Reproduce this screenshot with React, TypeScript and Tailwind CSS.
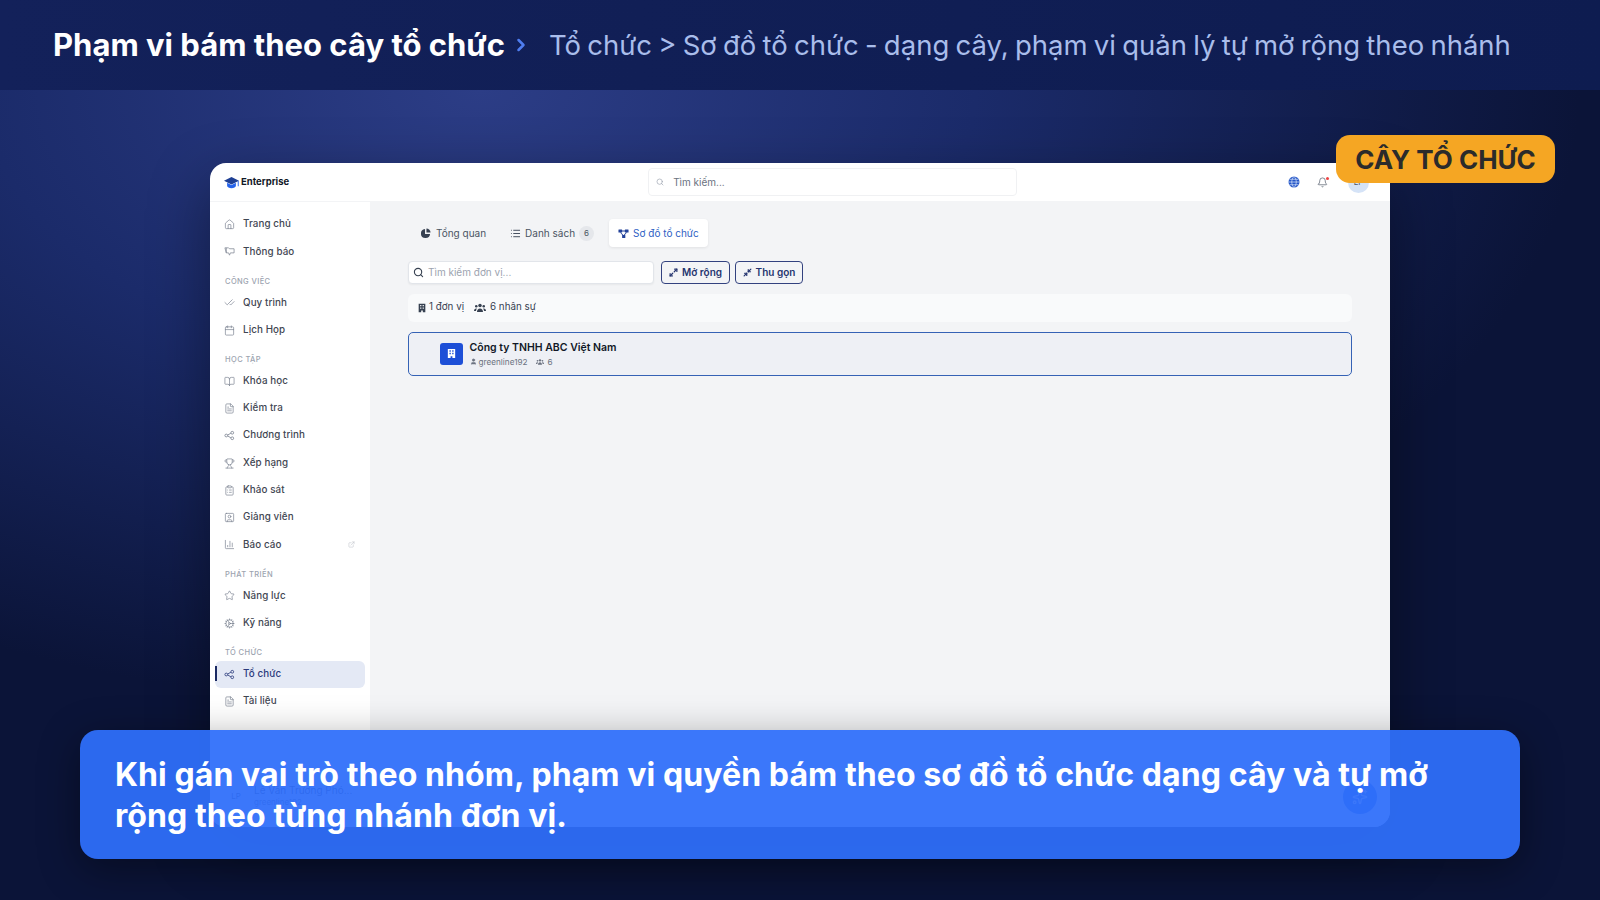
import {
  BarChart3,
  BookOpen,
  Calendar,
  CheckCheck,
  ChevronRight,
  ClipboardList,
  Cog,
  ExternalLink,
  FileText,
  Bell,
  Home,
  List,
  Maximize2,
  Minimize2,
  Search,
  Sparkles,
  SquareUser,
  Star,
  Trophy,
  User,
} from 'lucide-react';
import type { ReactNode } from 'react';

function OrgIcon({ className }: { className?: string }) {
  return (
    <svg viewBox="0 0 24 24" fill="none" stroke="currentColor" strokeWidth="1.8" className={className}>
      <circle cx="5" cy="12" r="3" />
      <circle cx="18" cy="6" r="3" />
      <circle cx="18" cy="18" r="3" />
      <path d="M8 11l7-4M8 13l7 4" />
    </svg>
  );
}

function TreeIcon({ className }: { className?: string }) {
  return (
    <svg viewBox="0 0 24 24" fill="currentColor" className={className}>
      <rect x="1" y="3" width="8" height="7" rx="1" />
      <rect x="15" y="3" width="8" height="7" rx="1" />
      <rect x="9" y="15" width="7" height="7" rx="1" />
      <path d="M8 5.500h8v2H8zM6 9l6 7-1.500 1-6-7zM18 9l-6 7 1.500 1 6-7z" />
    </svg>
  );
}

function LogoIcon({ className }: { className?: string }) {
  return (
    <svg viewBox="0 0 24 20" className={className}>
      <path d="M12 1L0 7l12 6 12-6z" fill="#1e3f94" />
      <path d="M5 10.500v5c0 2 3.500 3.500 7 3.500s7-1.500 7-3.500v-5l-7 3.500z" fill="#2563eb" />
      <path d="M22 8v8h1.500V7.300z" fill="#2563eb" />
    </svg>
  );
}

function AnnounceIcon({ className }: { className?: string }) {
  return (
    <svg viewBox="0 0 24 24" fill="none" stroke="currentColor" strokeWidth="1.6" className={className}>
      <path d="M2 4h8l2 2h10v9h-8l-2 5-2-5H5z" />
      <path d="M5 4v11" />
    </svg>
  );
}

function PieIcon({ className }: { className?: string }) {
  return (
    <svg viewBox="0 0 24 24" fill="currentColor" className={className}>
      <path d="M11 2a10 10 0 1 0 11 11H11z" />
      <path d="M14 1a9 9 0 0 1 9 9h-9z" />
    </svg>
  );
}

function BuildingIcon({ className }: { className?: string }) {
  return (
    <svg viewBox="0 0 24 24" className={className}>
      <path
        fillRule="evenodd"
        fill="currentColor"
        d="M4 2h16v20h-6v-4h-4v4H4zM7.500 5v3h3V5zm6 0v3h3V5zm-6 5.500v3h3v-3zm6 0v3h3v-3z"
      />
    </svg>
  );
}

function PeopleIcon({ className }: { className?: string }) {
  return (
    <svg viewBox="0 0 24 24" fill="currentColor" className={className}>
      <circle cx="12" cy="7" r="3.500" />
      <circle cx="4.500" cy="8.500" r="2.500" />
      <circle cx="19.500" cy="8.500" r="2.500" />
      <path d="M6 20c0-4 2.500-7 6-7s6 3 6 7zM0 18c0-3 1.500-5 4.500-5 .5 0 1 .1 1.400.2C4.700 14.600 4 16.200 4 18zM24 18c0-3-1.500-5-4.500-5-.5 0-1 .1-1.400.2 1.200 1.400 1.900 3 1.900 4.800z" />
    </svg>
  );
}

function GlobeIcon({ className }: { className?: string }) {
  return (
    <svg viewBox="0 0 24 24" className={className}>
      <circle cx="12" cy="12" r="11" fill="#2456c8" />
      <path d="M1 12h22M3 6.500h18M3 17.500h18M12 1c-6 6-6 16 0 22M12 1c6 6 6 16 0 22" fill="none" stroke="#dbe6fb" strokeWidth="1.400" />
    </svg>
  );
}

function NavItem({ icon, label, active, trailing }: { icon: ReactNode; label: string; active?: boolean; trailing?: ReactNode }) {
  return (
    <div className={`relative mx-[5px] flex h-[27.3px] items-center pl-[9px] pr-[10px] ${active ? 'rounded-md bg-[#e4e9f5] text-[#2b3a7c]' : 'text-[#3f4652]'}`}>
      {active && <span className="absolute left-0 top-[5px] h-[15px] w-[2px] bg-[#1b2a63]" />}
      <span className={`flex w-[19px] shrink-0 items-center ${active ? 'text-[#2b3a7c]' : 'text-[#7b8290]'}`}>{icon}</span>
      <span className="text-[9.8px] font-medium tracking-[0.1px]">{label}</span>
      {trailing && <span className="ml-auto text-[#b0b5bf]">{trailing}</span>}
    </div>
  );
}

function SectionLabel({ children }: { children: string }) {
  return (
    <div className="flex h-[23.7px] items-end pb-[2px] pl-[15px] text-[7.5px] font-medium tracking-[0.4px] text-[#9ca3af]">
      {children}
    </div>
  );
}

const ic = 'h-[11px] w-[11px]';

function Sidebar() {
  return (
    <aside className="w-[160px] shrink-0 bg-white pt-[9px]">
      <NavItem icon={<Home className={ic} strokeWidth={1.5} />} label="Trang chủ" />
      <NavItem icon={<AnnounceIcon className={ic} />} label="Thông báo" />
      <SectionLabel>CÔNG VIỆC</SectionLabel>
      <NavItem icon={<CheckCheck className={ic} strokeWidth={1.5} />} label="Quy trình" />
      <NavItem icon={<Calendar className={ic} strokeWidth={1.5} />} label="Lịch Họp" />
      <SectionLabel>HỌC TẬP</SectionLabel>
      <NavItem icon={<BookOpen className={ic} strokeWidth={1.5} />} label="Khóa học" />
      <NavItem icon={<FileText className={ic} strokeWidth={1.5} />} label="Kiểm tra" />
      <NavItem icon={<OrgIcon className={ic} />} label="Chương trình" />
      <NavItem icon={<Trophy className={ic} strokeWidth={1.5} />} label="Xếp hạng" />
      <NavItem icon={<ClipboardList className={ic} strokeWidth={1.5} />} label="Khảo sát" />
      <NavItem icon={<SquareUser className={ic} strokeWidth={1.5} />} label="Giảng viên" />
      <NavItem
        icon={<BarChart3 className={ic} strokeWidth={1.5} />}
        label="Báo cáo"
        trailing={<ExternalLink className="h-[7px] w-[7px]" strokeWidth={1.5} />}
      />
      <SectionLabel>PHÁT TRIỂN</SectionLabel>
      <NavItem icon={<Star className={ic} strokeWidth={1.5} />} label="Năng lực" />
      <NavItem icon={<Cog className={ic} strokeWidth={1.5} />} label="Kỹ năng" />
      <SectionLabel>TỔ CHỨC</SectionLabel>
      <NavItem active icon={<OrgIcon className={ic} />} label="Tổ chức" />
      <NavItem icon={<FileText className={ic} strokeWidth={1.5} />} label="Tài liệu" />
      <div className="mt-[69px] flex items-center pl-[15px] text-[#1f2937]">
        <span className="flex h-[22px] w-[22px] items-center justify-center rounded-full text-[8px]">LP</span>
        <div className="ml-[7px]">
          <div className="text-[10px] leading-[13px]">Lê Văn Trương Phó...</div>
          <div className="text-[8px] leading-[11px] text-[#4b5563]">greenline192</div>
        </div>
      </div>
    </aside>
  );
}

function Tabs() {
  return (
    <div className="flex h-[28px] items-center text-[10px] text-[#4b5563]">
      <div className="flex items-center pl-[12px]">
        <PieIcon className="h-[11px] w-[11px] text-[#374151]" />
        <span className="ml-[5px]">Tổng quan</span>
      </div>
      <div className="ml-[24px] flex items-center">
        <List className="h-[11px] w-[11px] text-[#374151]" />
        <span className="ml-[4px]">Danh sách</span>
        <span className="ml-[4px] flex h-[15px] w-[15px] items-center justify-center rounded-full bg-[#e5e7eb] text-[8px]">6</span>
      </div>
      <div className="ml-[15px] flex h-[28px] items-center rounded-[4px] bg-white pl-[9px] pr-[9px] text-[#2f5fc4] shadow-[0_1px_3px_rgba(0,0,0,0.08)]">
        <TreeIcon className="h-[11px] w-[11px] text-[#23429a]" />
        <span className="ml-[4px]">Sơ đồ tổ chức</span>
      </div>
    </div>
  );
}

function Toolbar() {
  return (
    <div className="mt-[14px] flex h-[22.5px] gap-[5px]">
      <div className="flex w-[246px] items-center rounded-[4px] border border-[#e2e5ea] bg-white pl-[4px] text-[10px] text-[#9ca3af] shadow-[0_1px_2px_rgba(0,0,0,0.05)]">
        <Search className="h-[11px] w-[11px] text-[#374151]" strokeWidth={2.4} />
        <span className="ml-[4px]">Tìm kiếm đơn vị...</span>
      </div>
      <button className="ml-[2px] flex w-[69px] items-center justify-center gap-[4px] rounded-[4px] border border-[#33427f] text-[10px] font-semibold text-[#25346f]">
        <Maximize2 className="h-[9px] w-[9px]" strokeWidth={3.2} />
        Mở rộng
      </button>
      <button className="flex w-[68px] items-center justify-center gap-[4px] rounded-[4px] border border-[#33427f] text-[10px] font-semibold text-[#25346f]">
        <Minimize2 className="h-[9px] w-[9px]" strokeWidth={3.2} />
        Thu gọn
      </button>
    </div>
  );
}

function Content() {
  return (
    <main className="relative flex-1 bg-[#f3f4f6] pl-[38px] pr-[38px] pt-[17px]">
      <Tabs />
      <Toolbar />
      <div className="mt-[10.5px] flex h-[27.5px] items-center rounded-md bg-[#f9fafb] pl-[9px] text-[9.8px] text-[#374151]">
        <BuildingIcon className="h-[10px] w-[10px]" />
        <span className="ml-[2px]">1 đơn vị</span>
        <PeopleIcon className="ml-[10px] h-[12px] w-[12px]" />
        <span className="ml-[4px]">6 nhân sự</span>
      </div>
      <div className="mt-[10.5px] flex h-[43.5px] items-center rounded-[5px] border border-[#3562b5] bg-[#eef0f5] pl-[31px]">
        <div className="flex h-[22.5px] w-[22.5px] items-center justify-center rounded-[3px] bg-[#1d4fd7]">
          <BuildingIcon className="h-[11px] w-[11px] text-white" />
        </div>
        <div className="ml-[7px]">
          <div className="text-[10.5px] font-semibold leading-[14px] text-[#111827]">Công ty TNHH ABC Việt Nam</div>
          <div className="mt-[2px] flex items-center text-[8.2px] leading-[10px] text-[#6b7280]">
            <User className="h-[7px] w-[7px] fill-[#6b7280]" strokeWidth={2} />
            <span className="ml-[2px]">greenline192</span>
            <PeopleIcon className="ml-[8px] h-[8px] w-[8px]" />
            <span className="ml-[4px]">6</span>
          </div>
        </div>
      </div>
      <div className="absolute bottom-[13px] right-[13px] flex h-[34px] w-[34px] items-center justify-center rounded-full bg-[#2563eb] text-white">
        <Sparkles className="h-[16px] w-[16px]" strokeWidth={2} />
      </div>
    </main>
  );
}

function AppWindow() {
  return (
    <div className="flex h-[664px] w-[1180px] flex-col overflow-hidden rounded-2xl bg-white font-['Inter',sans-serif] shadow-[0_20px_60px_rgba(0,0,0,0.4)]">
      <header className="flex h-[39px] shrink-0 items-center border-b border-[#f3f4f6] pl-[14px] pr-[21px]">
        <LogoIcon className="h-[13px] w-[15px]" />
        <span className="ml-[2px] text-[9.5px] font-bold text-[#111827]">Enterprise</span>
        <div className="ml-[359px] flex h-[28px] w-[369px] items-center rounded-[4px] border border-[#f0f1f3] pl-[7px] text-[10px] text-[#6b7280]">
          <Search className="h-[8px] w-[8px] text-[#9ca3af]" />
          <span className="ml-[9px]">Tìm kiếm...</span>
        </div>
        <GlobeIcon className="ml-auto h-[12px] w-[12px]" />
        <span className="relative ml-[17px]">
          <Bell className="h-[11px] w-[11px] text-[#4b5563]" strokeWidth={1.5} />
          <span className="absolute -right-[1px] top-0 h-[3px] w-[3px] rounded-full bg-[#ef4444]" />
        </span>
        <span className="ml-[20px] flex h-[21px] w-[21px] items-center justify-center rounded-full bg-[#d5e3f7] text-[8px] text-[#4b5563]">LP</span>
      </header>
      <div className="flex min-h-0 flex-1">
        <Sidebar />
        <Content />
      </div>
    </div>
  );
}

export default function App() {
  return (
    <div className="relative flex h-[900px] w-[1600px] flex-col overflow-hidden bg-[#0a1235] font-['Inter',sans-serif]">
      <header className="flex h-[90px] shrink-0 items-center bg-[linear-gradient(90deg,#13215a,#0e1c50)] pl-[53px]">
        <h1 className="text-[31px] font-bold text-white">Phạm vi bám theo cây tổ chức</h1>
        <ChevronRight className="ml-[6px] h-[20px] w-[20px] text-[#4f7df0]" strokeWidth={3} />
        <p className="ml-[18px] mt-[2px] text-[27.5px] text-[#a9bdeb] [word-spacing:-1.5px]">Tổ chức &gt; Sơ đồ tổ chức - dạng cây, phạm vi quản lý tự mở rộng theo nhánh</p>
      </header>
      <section className="flex-1 bg-[radial-gradient(ellipse_1100px_620px_at_480px_0px,#2c3d86_0%,#1b2b6a_45%,#0b1438_100%)] pl-[210px] pt-[73px]">
        <AppWindow />
      </section>
      <div className="absolute left-[1336px] top-[135px] flex h-[48px] w-[219px] items-center justify-center rounded-[14px] bg-[#f5a623] text-[26px] font-bold text-[#2b2b2b]">
        CÂY TỔ CHỨC
      </div>
      <div className="absolute left-[80px] top-[730px] h-[129px] w-[1440px] rounded-[18px] bg-[#2f6ffa]/94 pl-[35px] pr-[60px] pt-[24px] text-[32px] font-bold leading-[41px] tracking-[0.08px] text-white shadow-[0_10px_40px_rgba(0,0,0,0.4)]">
        Khi gán vai trò theo nhóm, phạm vi quyền bám theo sơ đồ tổ chức dạng cây và tự mở rộng theo từng nhánh đơn vị.
      </div>
    </div>
  );
}
